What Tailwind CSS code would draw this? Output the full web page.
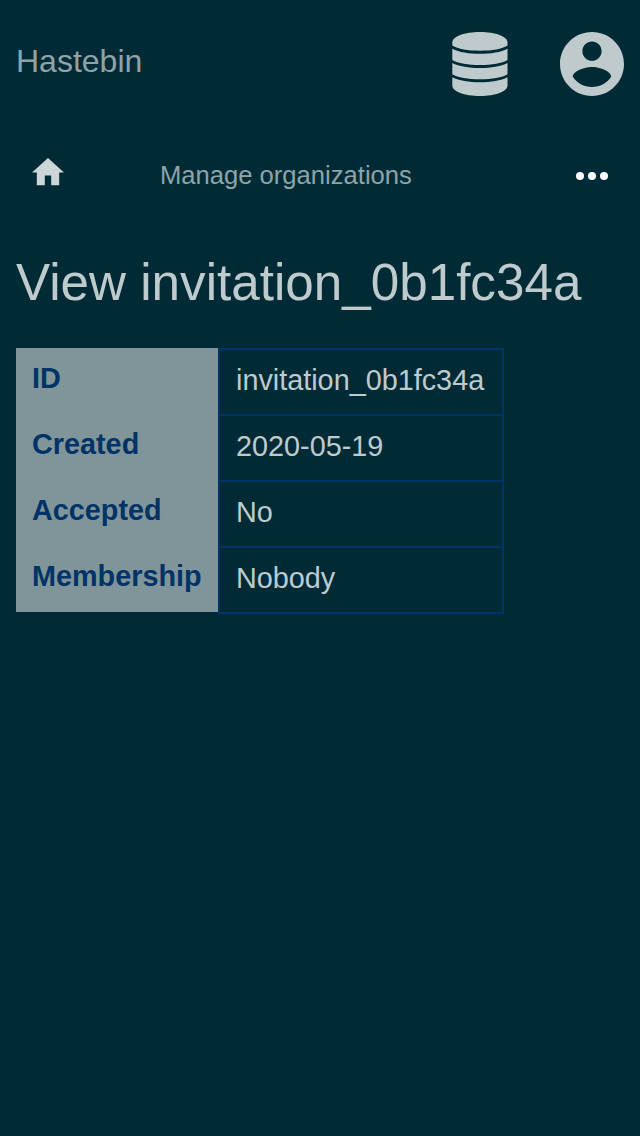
<!DOCTYPE html>
<html lang="en">
<head>
<meta charset="utf-8">
<title>Hastebin</title>
<script src="https://cdn.jsdelivr.net/npm/@tailwindcss/browser@4"></script>
</head>
<body class="min-h-screen bg-[#002b36] font-['Liberation_Sans',Arial,sans-serif] text-white/75">
<header class="flex h-32 items-center justify-between px-4">
  <a class="pb-1.5 text-[32px] leading-9 text-[#8fa3a8]">Hastebin</a>
  <div class="flex gap-[52px]">
    <svg class="h-16 w-14" viewBox="0 0 56 64" fill="#bfcacd">
      <path d="M.3 10.5C.3 4.500 12.500 0 28 0s27.500 4.500 27.500 10.500V13.500C50 17 40 18.700 28 18.700S6 17 .3 13.500z"/>
      <path d="M.3 16.700C7 20.200 17 21.800 28 21.800s21-1.600 27.500-5.100V28C50 31.500 40 33 28 33S6 31.500.3 28z"/>
      <path d="M.3 31C7 34.500 17 36 28 36s21-1.500 27.500-5V42.300C50 45.800 40 47.300 28 47.300S6 45.800.3 42.300z"/>
      <path d="M.3 45.300C7 48.800 17 50.300 28 50.300s21-1.500 27.500-5V53.500C55.500 59.500 43.500 64 28 64S.3 59.500.3 53.500z"/>
    </svg>
    <svg class="size-16" viewBox="2 2 20 20" fill="#bfcacd"><path d="M12 2C6.480 2 2 6.480 2 12s4.480 10 10 10 10-4.480 10-10S17.520 2 12 2zm0 3c1.660 0 3 1.340 3 3s-1.340 3-3 3-3-1.340-3-3 1.340-3 3-3zm0 14.200c-2.500 0-4.710-1.280-6-3.220.03-1.990 4-3.080 6-3.080 1.990 0 5.970 1.090 6 3.080-1.290 1.940-3.500 3.220-6 3.220z"/></svg>
  </div>
</header>
<nav class="flex h-24 items-center px-8">
  <svg class="mb-2 h-[27.200px] w-8" viewBox="2 3 20 17" fill="#ccd5d7"><path d="M10 20v-6h4v6h5v-8h3L12 3 2 12h3v8z"/></svg>
  <a class="mb-0.5 ml-24 text-[25.600px] leading-8 text-[#8fa3a8]">Manage organizations</a>
  <svg class="ml-auto h-2 w-8" viewBox="0 0 32 8" fill="#fff"><circle cx="4" cy="4" r="4"/><circle cx="16" cy="4" r="4"/><circle cx="28" cy="4" r="4"/></svg>
</nav>
<main class="px-4 pt-[29px]">
  <h1 class="text-[51.200px] leading-[60px] text-[#bfcacd]">View invitation_0b1fc34a</h1>
  <dl class="mt-[35px] grid w-[488px] grid-cols-[202px_286px] text-[28.800px] leading-8 text-[#bfcacd]">
    <dt class="h-[66px] bg-[#80959a] px-4 pt-[14px] font-bold text-[#003366]">ID</dt>
    <dd class="h-[68px] border-2 border-[#003366] px-4 pt-[14px] -mb-0.5">invitation_0b1fc34a</dd>
    <dt class="h-[66px] bg-[#80959a] px-4 pt-[14px] font-bold text-[#003366]">Created</dt>
    <dd class="h-[68px] border-2 border-[#003366] px-4 pt-[14px] -mb-0.5">2020-05-19</dd>
    <dt class="h-[66px] bg-[#80959a] px-4 pt-[14px] font-bold text-[#003366]">Accepted</dt>
    <dd class="h-[68px] border-2 border-[#003366] px-4 pt-[14px] -mb-0.5">No</dd>
    <dt class="h-[66px] bg-[#80959a] px-4 pt-[14px] font-bold text-[#003366]">Membership</dt>
    <dd class="h-[68px] border-2 border-[#003366] px-4 pt-[14px] -mb-0.5">Nobody</dd>
  </dl>
</main>
</body>
</html>
